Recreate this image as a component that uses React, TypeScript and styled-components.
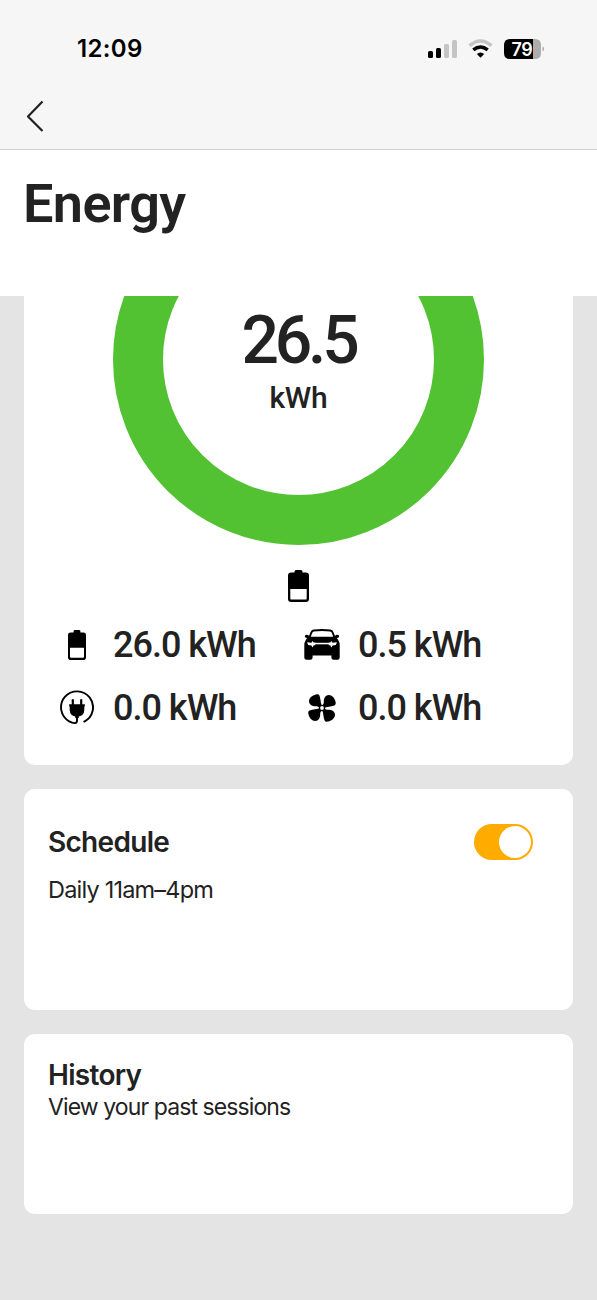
import React from 'react';
import styled, { createGlobalStyle } from 'styled-components';

const GlobalStyle = createGlobalStyle`
  * { box-sizing: border-box; }
  body { margin: 0; background: #e4e4e4; }
`;

const Screen = styled.div`
  display: flex;
  flex-direction: column;
  height: 1300px;
  overflow: hidden;
  background: #e4e4e4;
  color: #222;
  font-family: Inter, 'Liberation Sans', sans-serif;
`;

const TopBar = styled.header`
  flex: none;
  height: 150px;
  background: #f6f6f6;
  border-bottom: 1px solid #d2d2d2;
`;

const StatusBar = styled.div`
  display: flex;
  align-items: center;
  justify-content: space-between;
  height: 97px;
  padding: 0 53px 0 77px;
`;

const StatusIcons = styled.div`
  display: flex;
  align-items: center;
`;

const BackButton = styled.button`
  display: block;
  margin: 2px 0 0 25px;
  padding: 0;
  border: 0;
  background: none;
  svg { display: block; }
`;

const TitleArea = styled.div`
  flex: none;
  height: 146px;
  padding: 24px 23px 0;
  background: #fff;
`;

const Label = styled.div<{ $size: number; $line: number; $weight?: number; $track?: number; $color?: string }>`
  font-size: ${p => p.$size}px;
  line-height: ${p => p.$line}px;
  font-weight: ${p => p.$weight ?? 600};
  letter-spacing: ${p => p.$track ?? 0}px;
  color: ${p => p.$color ?? '#222'};
  white-space: pre;
`;

const Display = styled(Label)`
  font-family: Roboto, 'Liberation Sans', sans-serif;
`;

const Content = styled.main`
  display: flex;
  flex: 1;
  flex-direction: column;
  gap: 24px;
  padding: 0 24px;
  overflow: hidden;
`;

const Card = styled.section<{ $height: number; $top?: number }>`
  flex: none;
  height: ${p => p.$height}px;
  padding: ${p => p.$top ?? 0}px 24px 0;
  border-radius: 11px;
  background: #fff;
`;

const UsageCard = styled(Card)`
  display: flex;
  flex-direction: column;
  align-items: center;
  border-radius: 0 0 11px 11px;
  padding: 0;
`;

const Gauge = styled.div`
  display: grid;
  flex: none;
  width: 371px;
  height: 371px;
  margin-top: -122px;
  > * { grid-area: 1 / 1; }
`;

const GaugeText = styled.div`
  display: flex;
  flex-direction: column;
  align-items: center;
  padding-top: 132px;
`;

const SourceIcon = styled.div`
  display: flex;
  flex: none;
  height: 68px;
  padding-top: 25px;
`;

const Stats = styled.div`
  display: grid;
  grid-template-columns: 245px 245px;
  grid-auto-rows: 63px;
  width: 483px;
`;

const Stat = styled.div`
  display: flex;
  align-items: center;
  gap: 16px;
`;

const IconSlot = styled.div`
  display: flex;
  justify-content: center;
  width: 40px;
`;

const CardHead = styled.div`
  display: flex;
  align-items: center;
  justify-content: space-between;
  padding-right: 16px;
`;

const Switch = styled.div`
  display: flex;
  justify-content: flex-end;
  width: 59px;
  height: 36px;
  padding: 2px;
  border-radius: 18px;
  background: #ffab00;
`;

const Knob = styled.div`
  width: 32px;
  height: 32px;
  border-radius: 50%;
  background: #fff;
`;

const BatteryIcon = ({ width, height }: { width: number; height: number }) => (
  <svg width={width} height={height} viewBox="0 0 20 32" preserveAspectRatio="none">
    <path
      fillRule="evenodd"
      d="M7.700 0h4.600q1.500 0 1.500 1.500V2.600H17a3 3 0 0 1 3 3v23.400a3 3 0 0 1-3 3H3a3 3 0 0 1-3-3V5.600a3 3 0 0 1 3-3h3.200V1.500Q6.200 0 7.700 0zM2.200 19v9.400q0 1.200 1.200 1.200h13.200q1.200 0 1.200-1.200V19z"
    />
  </svg>
);

const CarIcon = () => (
  <svg width="36" height="31" viewBox="0 0 36 31">
    <path
      fillRule="evenodd"
      d="M9.500 .6Q18-.5 26.500 .6Q28.600 .9 29.400 3L31 7Q31.600 5.800 33.400 5.800Q35.200 6 35.200 7.300Q35 8.900 33.200 8.900H32.800L34.200 11Q35.700 13.500 35.700 16V28.500Q35.700 30.700 33.500 30.700H29.600Q27.400 30.700 27.400 28.500V26.600H8.600V28.500Q8.600 30.700 6.400 30.700H2.500Q.3 30.700 .3 28.500V16Q.3 13.500 1.800 11L3.200 8.900H2.800Q1 8.900 .8 7.300Q.8 6 2.600 5.800Q4.400 5.800 5 7L6.600 3Q7.400 .9 9.500 .6ZM10 2.500Q8.700 2.700 8.200 4L6.800 7.700H29.200L27.800 4Q27.300 2.700 26 2.500Q18 1.600 10 2.500Z"
    />
    <g fill="#fff">
      <path d="M3 13.200L7.500 13.700L8.600 12L9.700 13.400H11.300V16.300H9.700L8.600 18.500L7.500 16.500L4.200 15.900Z" />
      <path d="M33 13.200L28.500 13.700L27.400 12L26.300 13.400H24.700V16.300H26.300L27.400 18.500L28.500 16.500L31.800 15.900Z" />
      <path d="M11 13.800H25V15.300H11Z" />
    </g>
  </svg>
);

const PlugIcon = () => (
  <svg width="34" height="35" viewBox="0 0 34 35">
    <path
      d="M24.300 31.600A16 16 0 1 0 9.200 31.300Q12 32.900 14.800 33.100Q17 33.100 17 30.500V25"
      fill="none"
      stroke="#000"
      strokeWidth="1.900"
      strokeLinecap="round"
    />
    <path d="M11.700 9.500q1.100-1 2.200 0V14.200h6.200V9.500q1.100-1 2.200 0V14.200H24.800V16.500H24.300V20Q24 25.700 18.700 26.500V28H15.300V26.500Q10 25.700 9.700 20V16.500H9.200V14.200H11.700Z" />
  </svg>
);

const FanIcon = () => (
  <svg width="28" height="28" viewBox="-14 -14 28 28">
    {[0, 90, 180, 270].map(angle => (
      <path
        key={angle}
        transform={`rotate(${angle})`}
        d="M-.3-2.500C-1.200-4.500-1.200-6.500-1.600-8.500C-1.900-10-2-11.300-2.600-12.500C-3.200-13.700-4.400-13.900-6-13.600C-10-12.800-13-10-13-6.800C-12.800-2.800-9-1.700-6-1.800C-4.500-1.800-3.500-1.300-2.500-.3Z"
      />
    ))}
    <circle r="3.200" />
    <circle r="1.900" fill="#fff" />
  </svg>
);

const SignalIcons = () => (
  <svg width="118" height="24" viewBox="0 0 118 24">
    <g>
      <rect x="2" y="14" width="5" height="7" rx="1.500" />
      <rect x="10" y="11" width="5" height="10" rx="1.500" />
      <g fill="#c4c4c4">
        <rect x="18" y="7" width="5" height="14" rx="1.500" />
        <rect x="26" y="3" width="5" height="18" rx="1.500" />
      </g>
    </g>
    <g fill="none" strokeWidth="3.400">
      <path d="M43.500 8.600Q54.500-.8 65.500 8.600" stroke="#c4c4c4" />
      <path d="M47.300 12.900Q54.500 6.900 61.700 12.900" stroke="#000" />
    </g>
    <path d="M50.800 17Q54.500 14 58.200 17L54.500 20.800Z" />
    <path d="M84 2H107V22H84Q78 22 78 16V8Q78 2 84 2Z" />
    <path d="M107 2H109Q115 2 115 8V16Q115 22 109 22H107Z" fill="#adadad" />
    <path d="M116.500 9.500Q118.200 10.300 118.200 12T116.500 14.500Z" fill="#adadad" />
    <text x="85.500" y="18.500" fill="#fff" fontSize="18" fontWeight="600" letterSpacing="-0.500">
      79
    </text>
  </svg>
);

const stats = [
  { value: '26.0 kWh', icon: <BatteryIcon width={18} height={30} /> },
  { value: '0.5 kWh', icon: <CarIcon /> },
  { value: '0.0 kWh', icon: <PlugIcon /> },
  { value: '0.0 kWh', icon: <FanIcon /> },
];

export default function App() {
  return (
    <>
      <GlobalStyle />
      <Screen>
        <TopBar>
          <StatusBar>
            <Label $size={24} $line={30} $track={0.35} $color="#000">12:09</Label>
            <StatusIcons>
              <SignalIcons />
            </StatusIcons>
          </StatusBar>
          <BackButton aria-label="Back">
            <svg width="20" height="36" viewBox="0 0 20 36" fill="none" stroke="#222" strokeWidth="2.200">
              <path d="M17.500 2.500L3 17.500L17.500 32" strokeLinejoin="round" />
            </svg>
          </BackButton>
        </TopBar>
        <TitleArea>
          <Display $size={54} $line={60} $track={-0.6}>Energy</Display>
        </TitleArea>
        <Content>
          <UsageCard $height={469}>
            <Gauge>
              <svg width="371" height="371" viewBox="0 0 371 371">
                <circle cx="185.500" cy="185.500" r="160.500" fill="none" stroke="#52c232" strokeWidth="50" />
              </svg>
              <GaugeText>
                <Display $size={66} $line={70} $weight={500} $track={-4.2}>26.5</Display>
                <Display $size={30} $line={43} $weight={500} $track={-0.2}>kWh</Display>
              </GaugeText>
            </Gauge>
            <SourceIcon>
              <BatteryIcon width={21} height={32} />
            </SourceIcon>
            <Stats>
              {stats.map((s, i) => (
                <Stat key={i}>
                  <IconSlot>{s.icon}</IconSlot>
                  <Display $size={36} $line={44} $weight={500} $track={-1}>{s.value}</Display>
                </Stat>
              ))}
            </Stats>
          </UsageCard>
          <Card $height={221} $top={35}>
            <CardHead>
              <Label $size={28} $line={34} $track={-0.7}>Schedule</Label>
              <Switch role="switch" aria-checked="true">
                <Knob />
              </Switch>
            </CardHead>
            <Label $size={23.5} $line={60} $weight={400} $track={-0.8}>Daily 11am–4pm</Label>
          </Card>
          <Card $height={180} $top={24}>
            <Label $size={28} $line={34} $track={-0.7}>History</Label>
            <Label $size={23} $line={30} $weight={400} $track={-0.9}>View your past sessions</Label>
          </Card>
        </Content>
      </Screen>
    </>
  );
}
